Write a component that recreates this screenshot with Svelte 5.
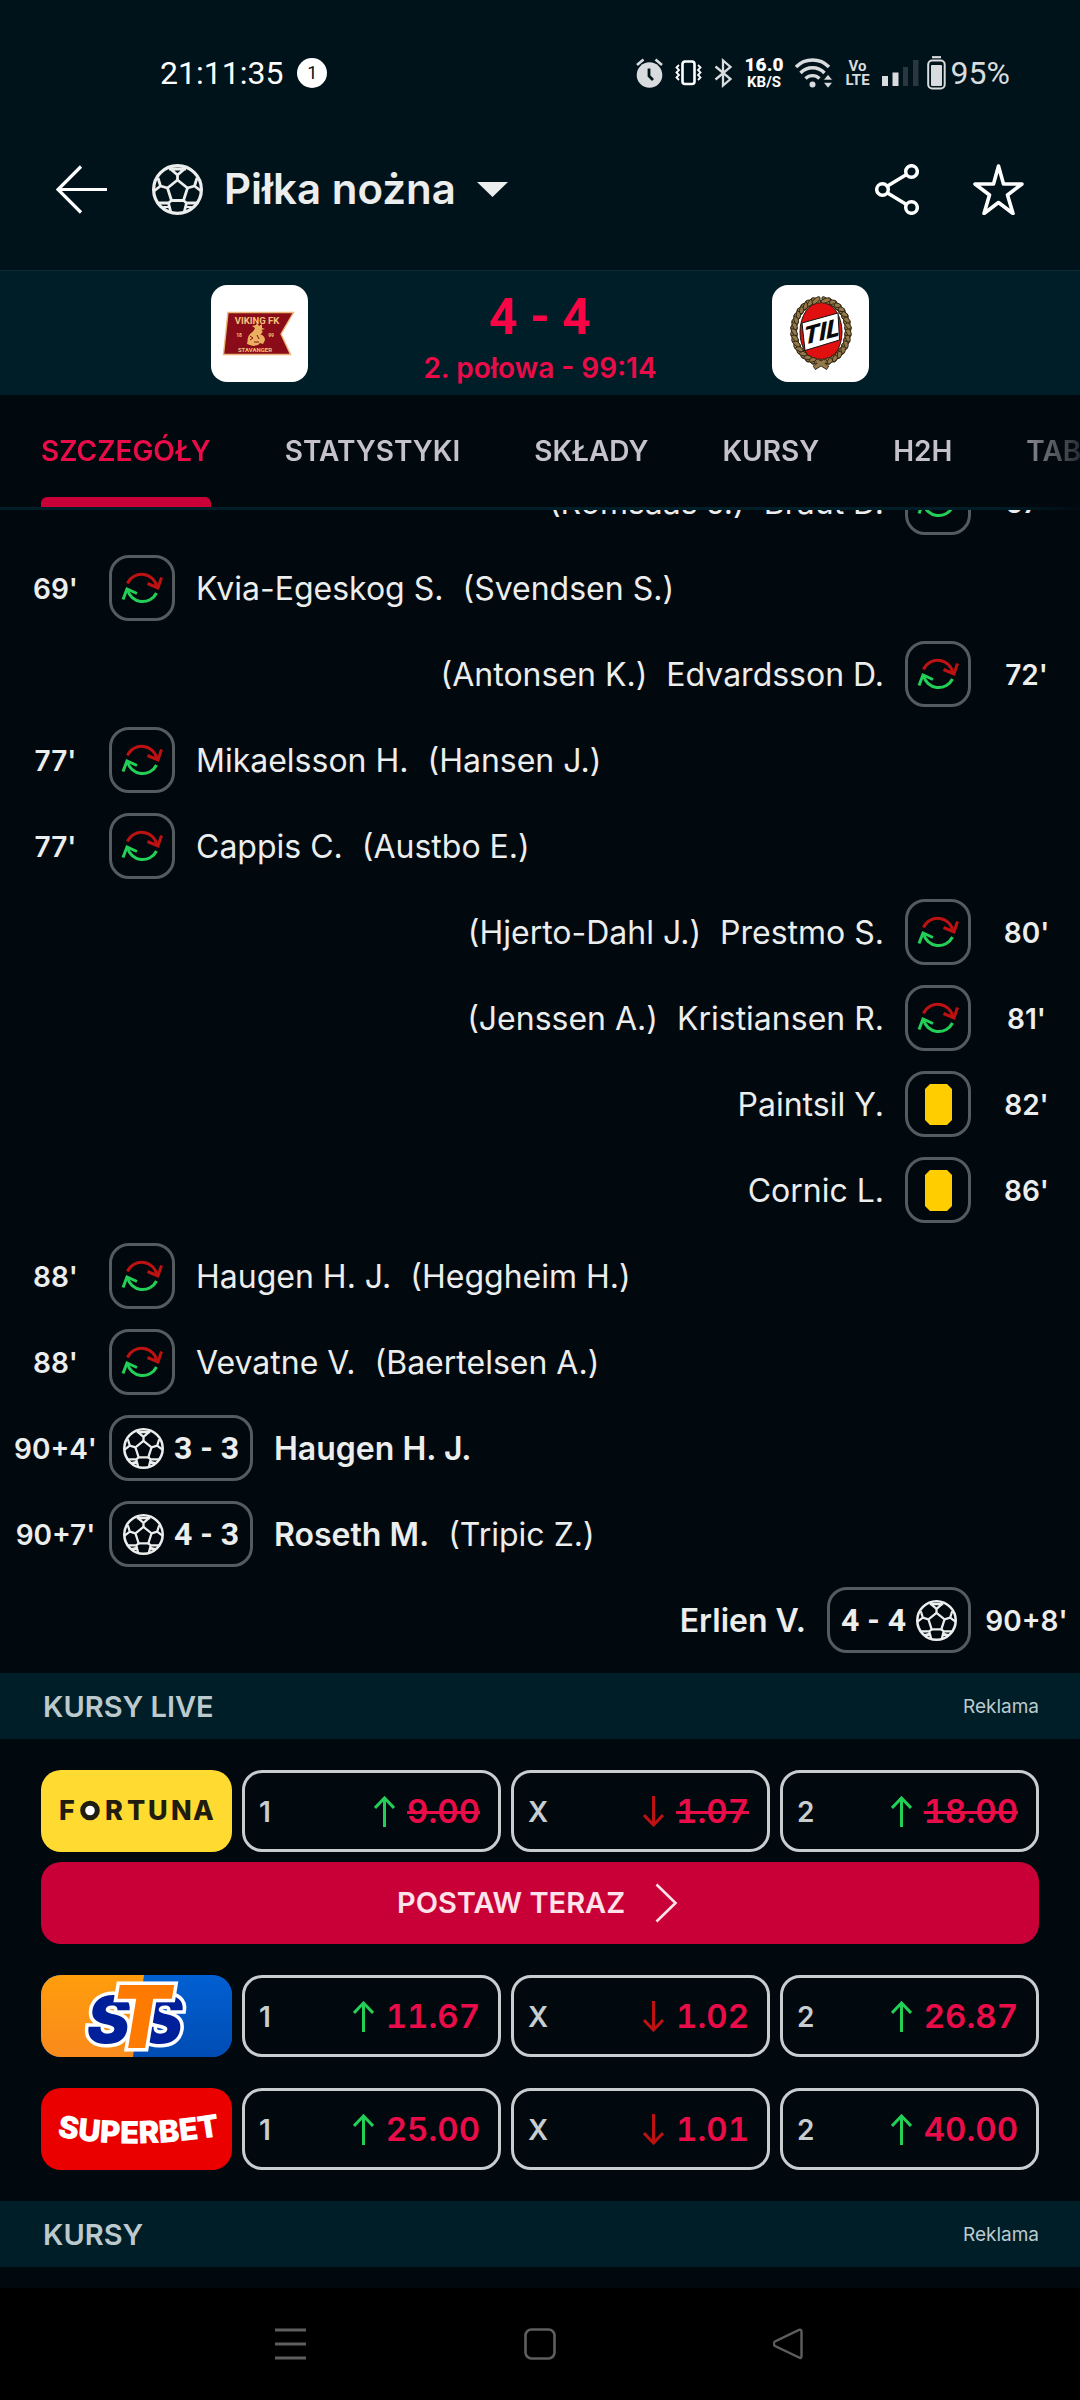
<script>
  const tabs = ['SZCZEGÓŁY', 'STATYSTYKI', 'SKŁADY', 'KURSY', 'H2H', 'TABELA'];

  const events = [
    { side: 'away', time: "67'", type: 'sub', name: 'Braut D.', extra: '(Romsaas J.)' },
    { side: 'home', time: "69'", type: 'sub', name: 'Kvia-Egeskog S.', extra: '(Svendsen S.)' },
    { side: 'away', time: "72'", type: 'sub', name: 'Edvardsson D.', extra: '(Antonsen K.)' },
    { side: 'home', time: "77'", type: 'sub', name: 'Mikaelsson H.', extra: '(Hansen J.)' },
    { side: 'home', time: "77'", type: 'sub', name: 'Cappis C.', extra: '(Austbo E.)' },
    { side: 'away', time: "80'", type: 'sub', name: 'Prestmo S.', extra: '(Hjerto-Dahl J.)' },
    { side: 'away', time: "81'", type: 'sub', name: 'Kristiansen R.', extra: '(Jenssen A.)' },
    { side: 'away', time: "82'", type: 'card', name: 'Paintsil Y.' },
    { side: 'away', time: "86'", type: 'card', name: 'Cornic L.' },
    { side: 'home', time: "88'", type: 'sub', name: 'Haugen H. J.', extra: '(Heggheim H.)' },
    { side: 'home', time: "88'", type: 'sub', name: 'Vevatne V.', extra: '(Baertelsen A.)' },
    { side: 'home', time: "90+4'", type: 'goal', score: '3 - 3', name: 'Haugen H. J.' },
    { side: 'home', time: "90+7'", type: 'goal', score: '4 - 3', name: 'Roseth M.', extra: '(Tripic Z.)' },
    { side: 'away', time: "90+8'", type: 'goal', score: '4 - 4', name: 'Erlien V.' }
  ];

  const bookmakers = [
    { id: 'fortuna', odds: ['9.00', '1.07', '18.00'], suspended: true, cta: true },
    { id: 'sts', odds: ['11.67', '1.02', '26.87'] },
    { id: 'superbet', odds: ['25.00', '1.01', '40.00'] }
  ];
  const picks = [
    { label: '1', up: true },
    { label: 'X', up: false },
    { label: '2', up: true }
  ];

  const leaves = [];
  for (let i = 0; i < 15; i++) {
    const a = ((100 + i * 11.4) * Math.PI) / 180;
    for (const s of [1, -1]) {
      const x = 49 + s * 27 * Math.cos(a);
      const y = 46 + 31 * Math.sin(a);
      const dir = (Math.atan2(31 * Math.cos(a), -s * 27 * Math.sin(a)) * 180) / Math.PI;
      leaves.push({ x, y, r1: dir + 28, r2: dir - 28 });
    }
  }
</script>

{#snippet ball()}
  <svg class="ball" viewBox="0 0 51 51" aria-hidden="true">
    <g fill="none" stroke="currentColor" stroke-width="2.8" stroke-linejoin="round">
      <circle cx="25.5" cy="25.5" r="23.9" stroke-width="3.2" />
      <path d="M25.5 16 15.5 24l4 12.5h12L35.5 24z" />
      <path d="M25.5 16v-5M25.5 11 18 4.5M25.5 11 33 4.5M17 5h17" />
      <path d="M15.5 24 8.5 22M8.5 22 6 14M8.5 22 2 27M35.5 24l7-2M42.5 22 45 14M42.5 22l6.5 5" />
      <path d="M19.5 36.5 16.5 39M16.5 39H6M16.5 39 19 49M10 44l7-2M31.5 36.5l3 2.5M34.5 39H45M34.5 39 32 49M41 44l-7-2" />
    </g>
  </svg>
{/snippet}

{#snippet swap()}
  <svg class="swap" viewBox="0 0 60 60" aria-hidden="true">
    <g fill="none" stroke-width="3">
      <g stroke="#bd1212">
        <path d="M15.5 25.5A15.5 15.5 0 0 1 45 29.5" />
        <path d="M35.5 25.5 46 30l3.5-10.5" />
      </g>
      <g stroke="#24cf57">
        <path d="M44.5 35A15.5 15.5 0 0 1 15.5 31.5" />
        <path d="M25 35.5 15 31 11 41.5" />
      </g>
    </g>
  </svg>
{/snippet}

<div class="screen">
  <div class="status">
    <div class="clock"><span>21:11:35</span><span class="count">1</span></div>
    <div class="indicators">
      <svg width="27" height="30" viewBox="0 0 27 30" aria-hidden="true">
        <circle cx="13.5" cy="17" r="12.8" fill="#d9dcde" />
        <path d="M13 10.5V18l4 4" fill="none" stroke="#00131b" stroke-width="2.8" />
        <path d="M1 7 7.5 1.5M26 7 19.5 1.5" stroke="#d9dcde" stroke-width="2.6" />
      </svg>
      <svg width="27" height="26" viewBox="0 0 27 26" aria-hidden="true">
        <rect x="7.5" y="1.5" width="12" height="22.5" rx="2.5" fill="none" stroke="#fff" stroke-width="2.6" />
        <path d="M4 5 1.5 7.5 4 10 1.5 12.5 4 15 1.5 17.5 4 20M23 5l2.5 2.5L23 10l2.5 2.5L23 15l2.5 2.5L23 20" fill="none" stroke="#fff" stroke-width="1.8" />
      </svg>
      <svg width="19" height="30" viewBox="0 0 19 30" aria-hidden="true">
        <path d="M1.5 8.5 16.5 21 9 27.5V2.5L16.5 9 1.5 21.5" fill="none" stroke="#d9dcde" stroke-width="2.3" />
      </svg>
      <span class="speed"><b>16.0</b><small>KB/S</small></span>
      <svg width="38" height="30" viewBox="0 0 38 30" aria-hidden="true">
        <g fill="none" stroke="#d9dcde" stroke-width="3.4">
          <path d="M1 9a23 23 0 0 1 33 0M5.5 15a16.5 16.5 0 0 1 24 0M10.5 20.5a10 10 0 0 1 14 0" />
        </g>
        <circle cx="17.5" cy="26.5" r="3" fill="#d9dcde" />
        <path d="M28.5 22 33 16.5l4.5 5.5zM28.5 24.5 33 30l4.5-5.5z" fill="#d9dcde" stroke="#00131b" stroke-width=".6" />
      </svg>
      <span class="volte"><span>Vo</span><span>LTE</span></span>
      <svg width="37" height="28" viewBox="0 0 37 28" aria-hidden="true">
        <path d="M0 17h6v10H0zM10.5 13.5h6V27h-6z" fill="#d9dcde" />
        <path d="M21 8h5v19h-5zM31 1h5.5v26H31z" fill="#2a373e" />
      </svg>
      <span class="power">
        <svg width="19" height="34" viewBox="0 0 19 34" aria-hidden="true">
          <path d="M5 1.2h9" stroke="#d9dcde" stroke-width="2.2" />
          <rect x="1.2" y="4.5" width="16.5" height="28" rx="4" fill="none" stroke="#d9dcde" stroke-width="2" />
          <rect x="4" y="9" width="11" height="21" rx="1" fill="#d9dcde" />
        </svg>
        <span>95%</span>
      </span>
    </div>
  </div>

  <header class="bar">
    <button class="icon back" aria-label="Wstecz">
      <svg width="51" height="51" viewBox="0 0 51 51" aria-hidden="true">
        <path d="M51 25.5H2M25 2.5 2 25.5 25 48.5" fill="none" stroke="#fff" stroke-width="3.2" />
      </svg>
    </button>
    <button class="icon sport">
      {@render ball()}
      <span>Piłka nożna</span>
      <svg width="31" height="15" viewBox="0 0 31 15" aria-hidden="true"><path d="M0 0h31L15.5 15z" fill="#eceded" /></svg>
    </button>
    <button class="icon share" aria-label="Udostępnij">
      <svg width="44" height="51" viewBox="0 0 44 51" aria-hidden="true">
        <g fill="none" stroke="#fff" stroke-width="3.5">
          <circle cx="7.5" cy="25.5" r="5.8" /><circle cx="36.5" cy="7.5" r="5.8" /><circle cx="36.5" cy="43.5" r="5.8" />
          <path d="M12.5 22 31.5 10.5M12.5 29l19 11.5" />
        </g>
      </svg>
    </button>
    <button class="icon" aria-label="Dodaj do ulubionych">
      <svg width="51" height="51" viewBox="0 0 51 51" aria-hidden="true">
        <path d="M25.5 2 30.5 20H49L34.5 31 40 49.5 25.5 38.5 11 49.5 16.5 31 2 20H20.5z" fill="none" stroke="#fff" stroke-width="3.6" stroke-linejoin="round" />
      </svg>
    </button>
  </header>

  <section class="match">
    <div class="crest">
      <svg viewBox="0 0 97 97" role="img" aria-label="Viking">
        <path d="M17 27.5H82.5L70 49 79.5 69.5H12.5z" fill="#8a0c18" stroke="#e9b878" stroke-width="1.4" />
        <g fill="#f3c27c" font-family="Roboto, sans-serif" font-weight="700" text-anchor="middle">
          <text x="46" y="38.5" font-size="9.5">VIKING FK</text>
          <text x="28" y="51.5" font-size="5">18</text>
          <text x="60" y="51.5" font-size="5">99</text>
          <text x="44" y="66.5" font-size="6">STAVANGER</text>
        </g>
        <path d="M36 59c1-3 0-7 3-10 2-2 4-3 5-6l-3-2 4-1 1-2 2 3 3-2v4l3 1-4 1c3 1 1 4-1 4 3 1 5 3 5 6l-2 4-3-1-2 2-5 1z" fill="#e9b060" />
        <path d="M39 51l3 2-3 2M46 50l2 4M43 57h5" stroke="#8a0c18" stroke-width="1" fill="none" />
      </svg>
    </div>
    <div class="score">
      <strong>4 - 4</strong>
      <span>2. połowa - 99:14</span>
    </div>
    <div class="crest">
      <svg viewBox="0 0 97 97" role="img" aria-label="Tromsø IL">
        <ellipse cx="49" cy="47" rx="21" ry="30" fill="#e01010" stroke="#1a1208" />
        {#each leaves as l}
          <ellipse cx={l.x} cy={l.y} rx="5" ry="2.2" transform="rotate({l.r1} {l.x} {l.y})" fill="#94794a" stroke="#2c2110" stroke-width=".9" />
          <ellipse cx={l.x} cy={l.y} rx="5" ry="2.2" transform="rotate({l.r2} {l.x} {l.y})" fill="#94794a" stroke="#2c2110" stroke-width=".9" />
        {/each}
        <path d="M42 83 53 76M56 83 45 76" stroke="#2c2110" stroke-width="5" />
        <path d="M42.5 82.5 53 76M55.5 82.5 45 76" stroke="#94794a" stroke-width="3.5" />
        <path d="M30 38 66 28 67.5 55 33 65.5z" fill="#fff" stroke="#111" />
        <text transform="translate(32 60) skewY(-15)" font-family="Roboto, sans-serif" font-weight="900" font-style="italic" font-size="25" fill="#0a0a0a">TIL</text>
      </svg>
    </div>
  </section>

  <nav class="tabs" aria-label="Sekcje">
    {#each tabs as tab, i}
      <a href="#{tab}" class:active={i === 0}>{tab}</a>
    {/each}
  </nav>

  <main>
    <div class="viewport">
      <ul class="events">
        {#each events as e}
          <li class={e.side}>
            <span class="time">{e.time}</span>
            <span class="badge" class:goal={e.type === 'goal'}>
              {#if e.type === 'sub'}
                {@render swap()}
              {:else if e.type === 'card'}
                <svg width="27" height="41" viewBox="0 0 27 41" aria-hidden="true"><path d="M5 0h17l5 5v31l-5 5H5l-5-5V5z" fill="#ffcd00" /></svg>
              {:else}
                {@render ball()}<b>{e.score}</b>
              {/if}
            </span>
            <span class="name" class:scorer={e.type === 'goal'}>{e.name}</span>
            {#if e.extra}<span class="name extra">{e.extra}</span>{/if}
          </li>
        {/each}
      </ul>
    </div>

    <div class="heading"><h2>KURSY LIVE</h2><span>Reklama</span></div>
    <div class="odds">
      {#each bookmakers as b}
        <div class="book">
          <div class="line">
            <a class="brand {b.id}" href="#{b.id}" aria-label={b.id}>
              {#if b.id === 'fortuna'}
                <svg viewBox="0 0 191 82" aria-hidden="true">
                  <text y="50" x="18 64 86 107 130 152" font-family="Inter, sans-serif" font-weight="800" font-size="27" fill="#1f1c10">FRTUNA</text>
                  <circle cx="49" cy="40.5" r="7.3" fill="#fff" stroke="#1f1c10" stroke-width="5" />
                </svg>
              {:else if b.id === 'sts'}
                <svg viewBox="0 0 191 82" aria-hidden="true">
                  <defs>
                    <linearGradient id="warm" x1="0" y1="0" x2="0" y2="1"><stop offset="0" stop-color="#ff9d0c" /><stop offset="1" stop-color="#f98a1c" /></linearGradient>
                    <linearGradient id="cool" x1="0" y1="0" x2="0" y2="1"><stop offset="0" stop-color="#0260d2" /><stop offset="1" stop-color="#004cb4" /></linearGradient>
                  </defs>
                  <path d="M0 0h191v82H0z" fill="url(#cool)" />
                  <path d="M0 0h103L92 82H0z" fill="url(#warm)" />
                  <g font-family="Inter, sans-serif" font-weight="900" font-style="italic" stroke="#fff" stroke-width="7" paint-order="stroke" stroke-linejoin="miter">
                    <g font-size="64" fill="#00209b">
                      <text x="46" y="68">S</text>
                      <text x="99" y="68">S</text>
                    </g>
                    <text x="70" y="73" font-size="86" fill="#ff7a00">T</text>
                  </g>
                </svg>
              {:else}
                <svg viewBox="0 0 191 82" aria-hidden="true">
                  <path id="smile" d="M16 49Q96 63 184 47" fill="none" />
                  <text font-family="Inter, sans-serif" font-weight="900" font-size="31" fill="#fff"><textPath href="#smile">SUPERBET</textPath></text>
                </svg>
              {/if}
            </a>
            {#each picks as p, i}
              <button class="odd" class:suspended={b.suspended}>
                <span>{p.label}</span>
                <svg width="21" height="31" viewBox="0 0 21 31" aria-hidden="true">
                  {#if p.up}
                    <path d="M10.5 31V2M1 12l9.5-10L20 12" fill="none" stroke="#24cf57" stroke-width="3" />
                  {:else}
                    <path d="M10.5 0v29M1 19l9.5 10L20 19" fill="none" stroke="#bd1212" stroke-width="3" />
                  {/if}
                </svg>
                <b>{b.odds[i]}</b>
              </button>
            {/each}
          </div>
          {#if b.cta}
            <button class="cta">
              <span>POSTAW TERAZ</span>
              <svg width="23" height="40" viewBox="0 0 23 40" aria-hidden="true"><path d="M1.5 1.5 20.5 20 1.5 38.5" fill="none" stroke="#ffe3ea" stroke-width="2.6" /></svg>
            </button>
          {/if}
        </div>
      {/each}
    </div>
    <div class="heading"><h2>KURSY</h2><span>Reklama</span></div>
  </main>

  <footer>
    <button class="icon" aria-label="Ostatnie aplikacje">
      <svg width="32" height="32" viewBox="0 0 32 32" aria-hidden="true"><path d="M0 2h31M0 16h31M0 30h31" stroke="#5e5e5e" stroke-width="3" /></svg>
    </button>
    <button class="icon" aria-label="Ekran główny">
      <svg width="32" height="32" viewBox="0 0 32 32" aria-hidden="true"><rect x="1.5" y="1.5" width="29" height="29" rx="6" fill="none" stroke="#5e5e5e" stroke-width="2.6" /></svg>
    </button>
    <button class="icon" aria-label="Powrót">
      <svg width="32" height="32" viewBox="0 0 32 32" aria-hidden="true"><path d="M26 1.8Q28.5 1 28.5 4V28Q28.5 31 26 29.5L2 18Q-.5 16 2 13.5z" fill="none" stroke="#5e5e5e" stroke-width="2.4" /></svg>
    </button>
  </footer>
</div>

<style>
  :global(body) {
    margin: 0;
    background: #000;
  }
  .screen {
    min-height: 100vh;
    display: flex;
    flex-direction: column;
    background: #01080e;
    color: #eceded;
    font-family: Inter, Roboto, sans-serif;
    overflow: hidden;
  }
  svg {
    display: block;
    flex: none;
  }
  button {
    font: inherit;
    color: inherit;
    background: none;
    border: 0;
    padding: 0;
    cursor: pointer;
  }
  a {
    color: inherit;
    text-decoration: none;
  }

  .status {
    display: flex;
    justify-content: space-between;
    align-items: center;
    height: 108px;
    padding: 38px 70px 0 160px;
    box-sizing: border-box;
    background: #00131b;
    font: 32px/36px Roboto, sans-serif;
    color: #d9dcde;
  }
  .clock {
    display: flex;
    align-items: center;
    gap: 14px;
    color: #fff;
  }
  .count {
    width: 30px;
    height: 30px;
    border-radius: 50%;
    background: #fff;
    color: #00131b;
    font-size: 18px;
    line-height: 30px;
    text-align: center;
  }
  .indicators {
    display: flex;
    align-items: center;
    gap: 12px;
  }
  .speed,
  .volte {
    display: flex;
    flex-direction: column;
    align-items: center;
    font-weight: 700;
  }
  .speed {
    color: #fff;
  }
  .speed b {
    font-size: 19px;
    line-height: 18px;
  }
  .speed small {
    font-size: 15px;
    line-height: 16px;
  }
  .volte {
    font-size: 15px;
    line-height: 14px;
  }
  .power {
    display: flex;
    align-items: center;
    gap: 5px;
    margin-left: -4px;
  }

  .bar {
    display: flex;
    align-items: center;
    height: 163px;
    padding: 0 56px;
    box-sizing: border-box;
    background: #00131b;
    border-bottom: 1px solid #0f2a33;
  }
  .icon {
    display: flex;
    align-items: center;
    justify-content: center;
  }
  .back {
    margin-right: 45px;
  }
  .sport {
    gap: 21px;
    margin-right: auto;
    font-size: 42px;
    line-height: 50px;
    font-weight: 600;
  }
  .sport .ball {
    width: 51px;
  }
  .share {
    margin-right: 54px;
  }

  .match {
    display: flex;
    align-items: center;
    justify-content: center;
    height: 124px;
    background: #001e28;
  }
  .crest {
    width: 97px;
    height: 97px;
    border-radius: 16px;
    background: #fff;
  }
  .score {
    width: 464px;
    display: flex;
    flex-direction: column;
    align-items: center;
    padding-top: 12px;
    color: #f80546;
  }
  .score strong {
    font-family: Roboto, sans-serif;
    font-size: 50px;
    line-height: 58px;
    font-weight: 700;
  }
  .score span {
    font-size: 28px;
    line-height: 44px;
    font-weight: 600;
    color: #ea0c48;
  }

  .tabs {
    display: flex;
    gap: 74px;
    height: 115px;
    padding-left: 41px;
    box-sizing: border-box;
    border-bottom: 3px solid #001e28;
    overflow: hidden;
    white-space: nowrap;
    font-size: 28px;
    line-height: 92px;
    font-weight: 600;
    color: #c5c2ce;
    mask-image: linear-gradient(to right, #000 92%, transparent 102%);
  }
  .tabs a {
    padding-top: 10px;
  }
  .active {
    color: #ea0c48;
  }
  .active::after {
    content: "";
    display: block;
    height: 10px;
    border-radius: 6px 6px 0 0;
    background: #c80037;
  }

  .viewport {
    overflow: hidden;
    padding-bottom: 10px;
  }
  .events {
    list-style: none;
    margin: -51px 0 0;
    padding: 0;
  }
  .events li {
    display: flex;
    align-items: center;
    height: 86px;
  }
  .away {
    flex-direction: row-reverse;
  }
  .time {
    width: 109px;
    padding: 2px 0 0 2px;
    box-sizing: border-box;
    text-align: center;
    font-size: 28px;
    line-height: 32px;
    font-weight: 600;
  }
  .badge {
    display: flex;
    align-items: center;
    justify-content: center;
    gap: 10px;
    min-width: 66px;
    height: 66px;
    box-sizing: border-box;
    border: 3px solid #545c60;
    border-radius: 20px;
  }
  .badge.goal {
    min-width: 144px;
  }
  .away .badge {
    flex-direction: row-reverse;
  }
  .badge .ball {
    width: 41px;
  }
  .badge .swap {
    width: 60px;
  }
  .badge b {
    font-family: Roboto, sans-serif;
    font-size: 32px;
    line-height: 40px;
    font-weight: 700;
  }
  .name {
    font-size: 32px;
    line-height: 40px;
    padding-top: 2px;
    margin-left: 21px;
  }
  .away .name {
    margin: 0 21px 0 0;
  }
  .name.extra {
    margin-left: 19px;
  }
  .away .name.extra {
    margin: 0 19px 0 0;
  }
  .scorer {
    font-weight: 600;
  }

  .heading {
    display: flex;
    justify-content: space-between;
    align-items: center;
    height: 66px;
    padding: 0 41px 0 43px;
    background: #001e28;
    color: #bccacd;
  }
  h2 {
    margin: 0;
    font-size: 29px;
    line-height: 36px;
    font-weight: 600;
  }
  .heading span {
    font-size: 19px;
    line-height: 24px;
  }
  h2,
  .heading span,
  .odd span {
    padding-top: 2px;
  }

  .odds {
    display: flex;
    flex-direction: column;
    gap: 31px;
    padding: 31px 41px;
  }
  .book {
    display: flex;
    flex-direction: column;
    gap: 10px;
  }
  .line {
    display: grid;
    grid-template-columns: 191px 1fr 1fr 1fr;
    gap: 10px;
  }
  .brand {
    height: 82px;
    border-radius: 20px;
    overflow: hidden;
  }
  .fortuna {
    background: #ffdb31;
  }
  .sts {
    background: #0056c4;
  }
  .superbet {
    background: #eb0000;
  }
  .odd {
    display: flex;
    align-items: center;
    height: 82px;
    padding: 0 18px 0 14px;
    box-sizing: border-box;
    border: 3px solid #c8cdcf;
    border-radius: 20px;
    color: #c8cdcf;
    font-size: 28px;
    line-height: 36px;
    font-weight: 600;
  }
  .odd svg {
    margin: 0 12px 0 auto;
  }
  .odd b {
    font-size: 33px;
    font-weight: 600;
    font-variant-numeric: tabular-nums;
    color: #ea0c48;
  }
  .suspended b {
    text-decoration: line-through;
    text-decoration-thickness: 3px;
  }
  .cta {
    display: flex;
    align-items: center;
    justify-content: center;
    gap: 30px;
    height: 82px;
    padding-right: 5px;
    border-radius: 20px;
    background: #c80037;
    color: #ffe3ea;
    font-size: 29px;
    line-height: 36px;
    font-weight: 600;
  }

  footer {
    display: flex;
    justify-content: space-around;
    align-items: center;
    height: 112px;
    margin-top: auto;
    padding: 0 166px;
    background: #000;
  }
</style>
